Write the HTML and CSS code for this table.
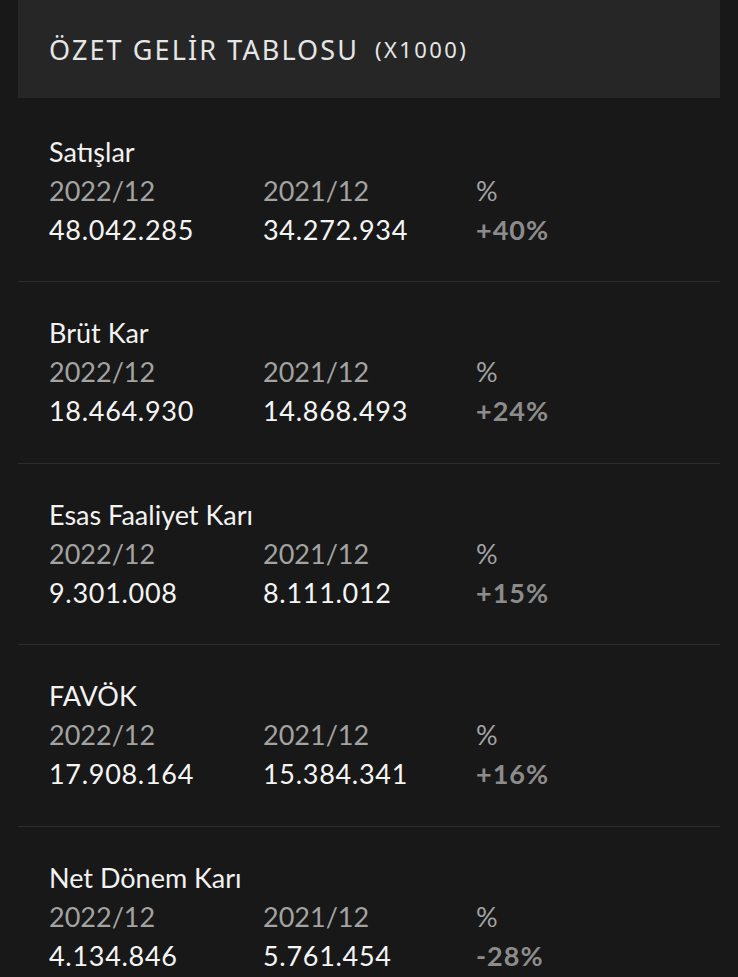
FILE: index.html
```html
<!DOCTYPE html>
<html lang="tr">
<head>
<meta charset="utf-8">
<link rel="stylesheet" href="styles.css">
</head>
<body>
<div class="page">
  <div class="header">
    <span class="title">ÖZET GELİR TABLOSU</span>
    <span class="unit">(X1000)</span>
  </div>
  <div class="row first">
    <div class="name">Satışlar</div>
    <div class="grid">
      <span class="year">2022/12</span><span class="year">2021/12</span><span class="year">%</span>
      <span class="val">48.042.285</span><span class="val">34.272.934</span><span class="pct">+40%</span>
    </div>
  </div>
  <div class="row">
    <div class="name">Brüt Kar</div>
    <div class="grid">
      <span class="year">2022/12</span><span class="year">2021/12</span><span class="year">%</span>
      <span class="val">18.464.930</span><span class="val">14.868.493</span><span class="pct">+24%</span>
    </div>
  </div>
  <div class="row">
    <div class="name">Esas Faaliyet Karı</div>
    <div class="grid">
      <span class="year">2022/12</span><span class="year">2021/12</span><span class="year">%</span>
      <span class="val">9.301.008</span><span class="val">8.111.012</span><span class="pct">+15%</span>
    </div>
  </div>
  <div class="row">
    <div class="name">FAVÖK</div>
    <div class="grid">
      <span class="year">2022/12</span><span class="year">2021/12</span><span class="year">%</span>
      <span class="val">17.908.164</span><span class="val">15.384.341</span><span class="pct">+16%</span>
    </div>
  </div>
  <div class="row last">
    <div class="name">Net Dönem Karı</div>
    <div class="grid">
      <span class="year">2022/12</span><span class="year">2021/12</span><span class="year">%</span>
      <span class="val">4.134.846</span><span class="val">5.761.454</span><span class="pct">-28%</span>
    </div>
  </div>
</div>
</body>
</html>
```
FILE: styles.css
```css
html, body {
  margin: 0;
  padding: 0;
  background: #181818;
}
.page {
  margin: 0 18px;
  font-family: Lato, "Noto Sans", sans-serif;
}
.header {
  height: 98px;
  background: #262626;
  padding-left: 31px;
  display: flex;
  align-items: center;
  gap: 16px;
  font-family: "Noto Sans", "DejaVu Sans", sans-serif;
  color: #e6e6e6;
}
.title {
  font-size: 27px;
  letter-spacing: 2.1px;
}
.unit {
  font-size: 22px;
  letter-spacing: 2.4px;
}
.row {
  padding: 31px 0 32.5px 31px;
  border-bottom: 1px solid #2c2c2c;
}
.row.first {
  padding-top: 33.5px;
}
.row.last {
  border-bottom: none;
}
.name {
  font-size: 27px;
  line-height: 39px;
  color: #f2f2f2;
}
.grid {
  display: grid;
  grid-template-columns: 214px 213px auto;
  font-size: 27px;
  line-height: 39px;
}
.year {
  color: #a3a3a3;
}
.val {
  color: #f4f4f4;
  letter-spacing: 0.7px;
}
.pct {
  color: #8c8c8c;
  font-weight: 700;
  letter-spacing: 1px;
}
```
